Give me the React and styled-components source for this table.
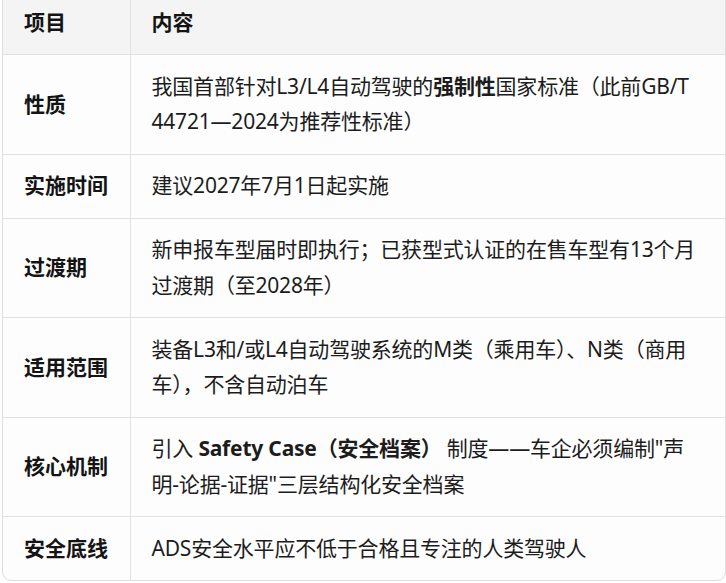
import React from 'react';
import styled, { createGlobalStyle } from 'styled-components';

const App = () => {
  const rows = [
    {
      label: '性质',
      content: (
        <>
          我国首部针对L3/L4自动驾驶的<Strong>强制性</Strong>国家标准（此前GB/T 44721—2024为推荐性标准）
        </>
      ),
    },
    { label: '实施时间', content: '建议2027年7月1日起实施' },
    { label: '过渡期', content: '新申报车型届时即执行；已获型式认证的在售车型有13个月过渡期（至2028年）' },
    { label: '适用范围', content: '装备L3和/或L4自动驾驶系统的M类（乘用车）、N类（商用车），不含自动泊车' },
    {
      label: '核心机制',
      content: (
        <>
          引入 <Strong>Safety Case（安全档案）</Strong> 制度——车企必须编制"声明-论据-证据"三层结构化安全档案
        </>
      ),
    },
    { label: '安全底线', content: 'ADS安全水平应不低于合格且专注的人类驾驶人' },
  ];

  return (
    <>
      <GlobalStyle />
      <Page>
        <Frame>
          <Table>
            <colgroup>
              <col style={{ width: 127 }} />
              <col />
            </colgroup>
            <thead>
              <tr>
                <HeadCell $first>项目</HeadCell>
                <HeadCell>内容</HeadCell>
              </tr>
            </thead>
            <tbody>
              {rows.map((row, i) => (
                <tr key={row.label}>
                  <LabelCell $last={i === rows.length - 1}>{row.label}</LabelCell>
                  <ContentCell $last={i === rows.length - 1}>{row.content}</ContentCell>
                </tr>
              ))}
            </tbody>
          </Table>
        </Frame>
      </Page>
    </>
  );
};

const GlobalStyle = createGlobalStyle`
  html, body {
    margin: 0;
    padding: 0;
    background: #ffffff;
  }
  body {
    font-family: "Noto Sans", "Noto Sans CJK SC", sans-serif;
    color: #1c1c1c;
    overflow: hidden;
  }
`;

const Page = styled.div`
  width: 726px;
  height: 583px;
  padding: 0 2px;
  box-sizing: border-box;
  overflow: hidden;
`;

const Frame = styled.div`
  margin-top: -10px;
  width: 722px;
  border: 1px solid #dedede;
  border-radius: 9px;
  overflow: hidden;
  background: #fdfdfd;
`;

const Table = styled.table`
  width: 100%;
  border-collapse: collapse;
  table-layout: fixed;
  font-size: 21px;
  line-height: 35.5px;
`;

const Cell = styled.td`
  padding: 13.75px 20px 13.75px 21px;
  vertical-align: middle;
  text-align: left;
  border-bottom: ${(p) => (p.$last ? 'none' : '1px solid #e2e2e2')};
`;

const HeadCell = styled(Cell).attrs({ as: 'th' })`
  background: #f4f4f4;
  font-weight: 700;
  color: #141414;
  border-right: ${(p) => (p.$first ? '1px solid #e2e2e2' : 'none')};
`;

const LabelCell = styled(Cell)`
  font-weight: 700;
  color: #141414;
  border-right: 1px solid #e2e2e2;
`;

const ContentCell = styled(Cell)`
  font-weight: 400;
  letter-spacing: -0.2px;
`;

const Strong = styled.strong`
  font-weight: 700;
`;

export default App;
